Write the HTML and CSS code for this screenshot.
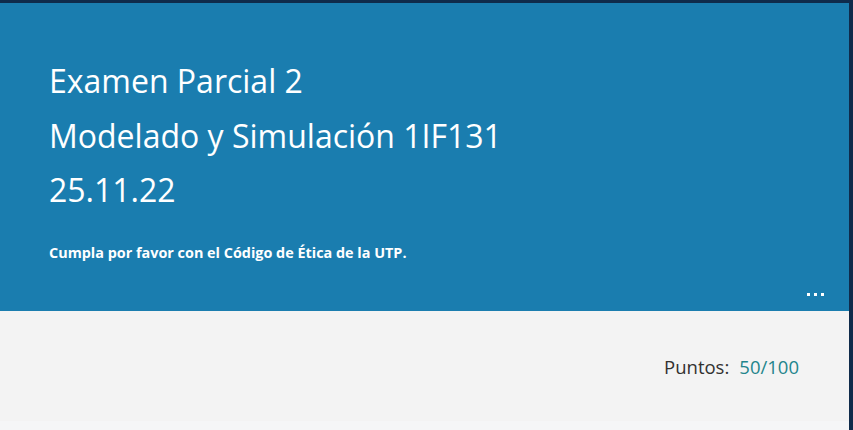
FILE: index.html
```html
<!DOCTYPE html>
<html lang="es">
<head>
<meta charset="utf-8">
<link rel="stylesheet" href="styles.css">
</head>
<body>
<div class="frame">
  <div class="main">
    <header class="banner">
      <div class="titles">
        <div class="title">Examen Parcial 2</div>
        <div class="title">Modelado y Simulación 1IF131</div>
        <div class="title">25.11.22</div>
      </div>
      <p class="note">Cumpla por favor con el Código de Ética de la UTP.</p>
      <div class="more" aria-label="Más opciones"><span></span><span></span><span></span></div>
    </header>
    <section class="score">
      <span class="label">Puntos:</span><span class="value">50/100</span>
    </section>
    <div class="rest"></div>
  </div>
  <div class="edge"></div>
</div>
</body>
</html>
```
FILE: styles.css
```css
html, body {
  margin: 0;
  padding: 0;
  height: 100%;
}
body {
  background: #0f2b4b;
  font-family: "Open Sans", "Noto Sans", sans-serif;
  overflow: hidden;
}
.frame {
  display: flex;
  height: 100%;
  padding-top: 3px;
  box-sizing: border-box;
}
.main {
  flex: 1;
  display: flex;
  flex-direction: column;
}
.edge {
  width: 4px;
  background: #0f2b4b;
}
.banner {
  position: relative;
  background: #1a7daf;
  color: #fff;
  height: 308px;
  box-sizing: border-box;
  padding: 51px 49px 0;
}
.titles {
  display: flex;
  flex-direction: column;
}
.title {
  font-size: 32px;
  line-height: 54.5px;
  font-weight: 400;
}
.note {
  margin: 25px 0 0;
  font-size: 14.4px;
  font-weight: 700;
}
.more {
  position: absolute;
  right: 25px;
  bottom: 15px;
  display: flex;
  gap: 4px;
}
.more span {
  width: 3px;
  height: 3px;
  background: #fff;
}
.score {
  background: #f3f3f3;
  height: 110px;
  box-sizing: border-box;
  display: flex;
  justify-content: flex-end;
  align-items: flex-start;
  padding: 43px 50px 0 0;
  font-size: 18.5px;
  color: #323130;
}
.value {
  color: #23858c;
  margin-left: 10px;
}
.rest {
  flex: 1;
  background: #f5f6f7;
}
```
